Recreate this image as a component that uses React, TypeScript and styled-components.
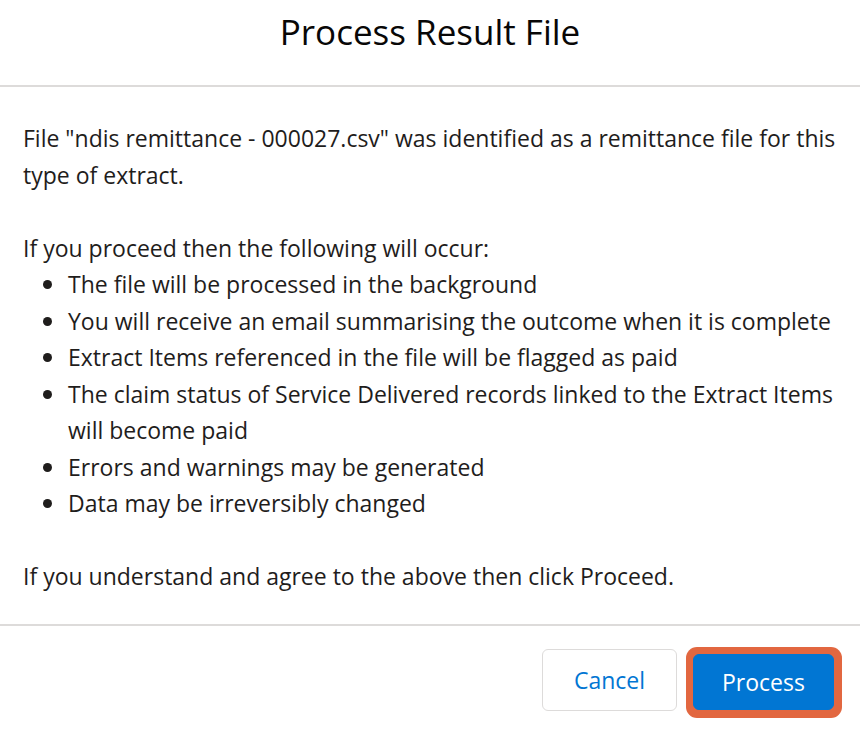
import React from "react";
import styled, { createGlobalStyle } from "styled-components";

const GlobalStyle = createGlobalStyle`
  html, body {
    margin: 0;
    padding: 0;
    background: #ffffff;
  }
  body {
    font-family: "Open Sans", "Noto Sans", "Liberation Sans", sans-serif;
    color: #1f1d1c;
  }
`;

const steps = [
  "The file will be processed in the background",
  "You will receive an email summarising the outcome when it is complete",
  "Extract Items referenced in the file will be flagged as paid",
  "The claim status of Service Delivered records linked to the Extract Items will become paid",
  "Errors and warnings may be generated",
  "Data may be irreversibly changed",
];

const App = () => (
  <>
    <GlobalStyle />
    <Modal>
      <Header>
        <h2>Process Result File</h2>
      </Header>
      <Body>
        <p>
          File "ndis remittance - 000027.csv" was identified as a remittance
          file for this type of extract.
        </p>
        <p className="lead">If you proceed then the following will occur:</p>
        <ul>
          {steps.map((step) => (
            <li key={step}>{step}</li>
          ))}
        </ul>
        <p>If you understand and agree to the above then click Proceed.</p>
      </Body>
      <Footer>
        <Button>Cancel</Button>
        <FocusRing>
          <Button $primary>Process</Button>
        </FocusRing>
      </Footer>
    </Modal>
  </>
);

export default App;

const Modal = styled.div`
  width: 860px;
  height: 730px;
  display: flex;
  flex-direction: column;
  background: #ffffff;
  overflow: hidden;
`;

const Header = styled.div`
  height: 85px;
  border-bottom: 2px solid #dddbda;
  display: flex;
  justify-content: center;

  h2 {
    margin: 9px 0 0;
    font-size: 35px;
    font-weight: 400;
    line-height: 46px;
    color: #080707;
  }
`;

const Body = styled.div`
  padding: 33px 20px 29px 23px;
  font-size: 23px;
  line-height: 36.5px;
  border-bottom: 2px solid #dddbda;

  p {
    margin: 0;
  }

  .lead {
    margin-top: 36.5px;
  }

  ul {
    list-style: none;
    margin: 0 0 36.5px;
    padding-left: 45px;
  }

  li {
    position: relative;
  }

  li::before {
    content: "";
    position: absolute;
    left: -25px;
    top: 14px;
    width: 9px;
    height: 9px;
    border-radius: 50%;
    background: #1f1d1c;
  }
`;

const Footer = styled.div`
  display: flex;
  justify-content: flex-end;
  align-items: flex-start;
  gap: 9px;
  padding: 21px 18px 0 0;
`;

const FocusRing = styled.div`
  padding: 7px 8px 8px 7px;
  border-radius: 11px;
  background: #e26740;
  display: flex;
`;

const Button = styled.button<{ $primary?: boolean }>`
  height: ${({ $primary }) => ($primary ? "56px" : "62px")};
  width: ${({ $primary }) => ($primary ? "141px" : "135px")};
  margin-top: ${({ $primary }) => ($primary ? "0" : "2px")};
  padding: 0;
  border-radius: 6px;
  border: 1px solid ${({ $primary }) => ($primary ? "#0176d3" : "#dddbda")};
  background: ${({ $primary }) => ($primary ? "#0176d3" : "#ffffff")};
  color: ${({ $primary }) => ($primary ? "#ffffff" : "#0176d3")};
  font-family: "Open Sans", "Noto Sans", "Liberation Sans", sans-serif;
  font-size: 23px;
  cursor: pointer;
`;
